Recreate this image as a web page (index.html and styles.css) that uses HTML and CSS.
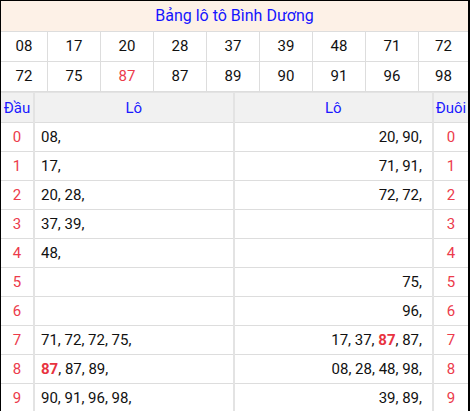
FILE: index.html
```html
<!DOCTYPE html>
<html lang="vi">
<head>
    <meta charset="UTF-8">
    <meta name="viewport" content="width=device-width, initial-scale=1.0">
    <title>Bảng lô tô Bình Dương</title>
    <link rel="stylesheet" href="styles.css">
</head>
<body>
    <div class="board">
        <div class="title">Bảng lô tô Bình Dương</div>

        <!-- các số đã về -->
        <div class="nums">
            <div class="num">08</div>
            <div class="num">17</div>
            <div class="num">20</div>
            <div class="num">28</div>
            <div class="num">37</div>
            <div class="num">39</div>
            <div class="num">48</div>
            <div class="num">71</div>
            <div class="num">72</div>
            <div class="num">72</div>
            <div class="num">75</div>
            <div class="num red">87</div>
            <div class="num">87</div>
            <div class="num">89</div>
            <div class="num">90</div>
            <div class="num">91</div>
            <div class="num">96</div>
            <div class="num">98</div>
        </div>

        <!-- đầu / đuôi -->
        <table class="loto">
            <thead>
                <tr>
                    <th class="head">Đầu</th>
                    <th>Lô</th>
                    <th>Lô</th>
                    <th class="tail">Đuôi</th>
                </tr>
            </thead>
            <tbody>
                <tr><td class="head">0</td><td class="left">08,</td><td class="right">20, 90,</td><td class="tail">0</td></tr>
                <tr><td class="head">1</td><td class="left">17,</td><td class="right">71, 91,</td><td class="tail">1</td></tr>
                <tr><td class="head">2</td><td class="left">20, 28,</td><td class="right">72, 72,</td><td class="tail">2</td></tr>
                <tr><td class="head">3</td><td class="left">37, 39,</td><td class="right"></td><td class="tail">3</td></tr>
                <tr><td class="head">4</td><td class="left">48,</td><td class="right"></td><td class="tail">4</td></tr>
                <tr><td class="head">5</td><td class="left"></td><td class="right">75,</td><td class="tail">5</td></tr>
                <tr><td class="head">6</td><td class="left"></td><td class="right">96,</td><td class="tail">6</td></tr>
                <tr><td class="head">7</td><td class="left">71, 72, 72, 75,</td><td class="right">17, 37, <b class="hit">87</b>, 87,</td><td class="tail">7</td></tr>
                <tr><td class="head">8</td><td class="left"><b class="hit">87</b>, 87, 89,</td><td class="right">08, 28, 48, 98,</td><td class="tail">8</td></tr>
                <tr><td class="head">9</td><td class="left">90, 91, 96, 98,</td><td class="right">39, 89,</td><td class="tail">9</td></tr>
            </tbody>
        </table>
    </div>
</body>
</html>
```

FILE: styles.css
```css
body {
    margin: 0;
    padding: 0;
    background-color: #fff;
    font-family: Roboto, "Liberation Sans", Arial, sans-serif;
    font-size: 15px;
    color: #111;
}

.board {
    width: 467px;
    border-style: solid;
    border-color: #000;
    border-width: 1px 2px 2px 1px;
    overflow: hidden;
}

.title {
    height: 30px;
    line-height: 30px;
    text-align: center;
    background-color: #fdf1e7;
    color: #1515ff;
    font-size: 16px;
    border-bottom: 1px solid #ddd;
}

.nums {
    display: grid;
    grid-template-columns: 47px repeat(7, 53px) 1fr;
}

.num {
    height: 29px;
    line-height: 29px;
    text-align: center;
    border-right: 1px solid #ddd;
    border-bottom: 1px solid #ddd;
}

.num:nth-child(9n) {
    border-right: none;
}

.red {
    color: #ec3b4b;
}

.loto {
    width: 100%;
    border-collapse: collapse;
    table-layout: fixed;
}

.loto th {
    height: 29px;
    padding: 0;
    background-color: #f1f1f1;
    color: #1a1aff;
    font-weight: normal;
    border-top: 1px solid #e3e3e3;
    border-bottom: 1px solid #ddd;
    border-right: 2px solid #e3e3e3;
}

.loto td {
    height: 28px;
    padding: 0;
    border-bottom: 1px solid #ddd;
    border-right: 2px solid #e3e3e3;
}

.loto .head {
    width: 32px;
    text-align: center;
}

.loto .tail {
    width: 34px;
    text-align: center;
    border-right: none;
}

.loto td.head,
.loto td.tail {
    color: #ec3b4b;
}

.loto .left {
    text-align: left;
    padding-left: 6px;
}

.loto .right {
    text-align: right;
    padding-right: 10px;
}

.hit {
    color: #e8333f;
}
```
